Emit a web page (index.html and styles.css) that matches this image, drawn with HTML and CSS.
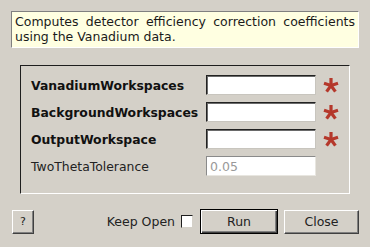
FILE: index.html
```html
<!DOCTYPE html>
<html lang="en">
<head>
    <meta charset="UTF-8">
    <title>Algorithm Dialog</title>
    <link rel="stylesheet" href="styles.css">
</head>
<body>
    <div class="dialog">
        <div class="description">Computes detector efficiency correction coefficients using the Vanadium data.</div>

        <div class="group">
            <!-- Propriedades -->
            <div class="label bold">VanadiumWorkspaces</div>
            <input class="field" type="text">
            <svg class="star" viewBox="0 0 16 16"><g stroke="#b5382b" stroke-width="3.2" stroke-linecap="butt"><line x1="8" y1="8.5" x2="8" y2="1"/><line x1="8" y1="8.5" x2="15" y2="6.2"/><line x1="8" y1="8.5" x2="12.4" y2="14.6"/><line x1="8" y1="8.5" x2="3.6" y2="14.6"/><line x1="8" y1="8.5" x2="1" y2="6.2"/></g></svg>

            <div class="label bold">BackgroundWorkspaces</div>
            <input class="field" type="text">
            <svg class="star" viewBox="0 0 16 16"><g stroke="#b5382b" stroke-width="3.2" stroke-linecap="butt"><line x1="8" y1="8.5" x2="8" y2="1"/><line x1="8" y1="8.5" x2="15" y2="6.2"/><line x1="8" y1="8.5" x2="12.4" y2="14.6"/><line x1="8" y1="8.5" x2="3.6" y2="14.6"/><line x1="8" y1="8.5" x2="1" y2="6.2"/></g></svg>

            <div class="label bold">OutputWorkspace</div>
            <input class="field" type="text">
            <svg class="star" viewBox="0 0 16 16"><g stroke="#b5382b" stroke-width="3.2" stroke-linecap="butt"><line x1="8" y1="8.5" x2="8" y2="1"/><line x1="8" y1="8.5" x2="15" y2="6.2"/><line x1="8" y1="8.5" x2="12.4" y2="14.6"/><line x1="8" y1="8.5" x2="3.6" y2="14.6"/><line x1="8" y1="8.5" x2="1" y2="6.2"/></g></svg>

            <div class="label">TwoThetaTolerance</div>
            <input class="field disabled" type="text" placeholder="0.05">
            <span></span>
        </div>

        <div class="actions">
            <button class="btn help">?</button>
            <span class="spacer"></span>
            <span class="keep">Keep Open</span>
            <span class="check"></span>
            <button class="btn run">Run</button>
            <button class="btn close">Close</button>
        </div>
    </div>
</body>
</html>
```

FILE: styles.css
```css
/* Estilo geral */
body {
    margin: 0;
    background: #d4d0c8;
    font-family: "DejaVu Sans", sans-serif;
    font-size: 12px;
    color: #000;
}

.dialog {
    width: 348px;
    height: 225px;
    padding: 11px;
}

.description {
    box-sizing: border-box;
    width: 348px;
    height: 37px;
    padding: 2px 3px 0 3px;
    background: #ffffe1;
    border: 1px solid;
    border-color: #808080 #fff #fff #808080;
    font-size: 12.5px;
    line-height: 15px;
    text-align: justify;
    color: #1a1a1a;
}

.group {
    box-sizing: border-box;
    width: 330px;
    height: 129px;
    margin: 17px 0 0 9px;
    padding: 9px 0 0 10px;
    border: 1px solid;
    border-color: #1e1e1e #fff #fff #1e1e1e;
    display: grid;
    grid-template-columns: 175px 110px 22px;
    grid-auto-rows: 20px;
    row-gap: 7px;
    align-items: center;
}

.label {
    font-size: 12.4px;
    color: #222;
}

.bold {
    font-weight: bold;
    color: #111;
}

.field {
    box-sizing: border-box;
    width: 110px;
    height: 20px;
    margin: 0;
    padding: 0 3px;
    background: #fff;
    border: 1px solid;
    border-color: #222 #c8c5be #c8c5be #222;
    box-shadow: inset 1px 1px 0 #6a6a6a;
    font-family: "DejaVu Sans", sans-serif;
    font-size: 12.5px;
    outline: none;
}

.field.disabled {
    border-color: #8a8a8a #e8e6e0 #e8e6e0 #8a8a8a;
    box-shadow: none;
}

.field.disabled::placeholder {
    color: #999;
}

.star {
    width: 16px;
    height: 16px;
    margin-left: 7px;
}

.actions {
    display: flex;
    align-items: center;
    margin-top: 15px;
    padding-left: 1px;
    width: 347px;
}

.spacer {
    flex: 1;
}

.btn {
    box-sizing: border-box;
    height: 24px;
    margin: 0;
    padding: 0;
    background: #d4d0c8;
    border: 1px solid;
    border-color: #fff #404040 #404040 #fff;
    box-shadow: inset -1px -1px 0 #808080;
    font-family: "DejaVu Sans", sans-serif;
    font-size: 12.5px;
    color: #222;
}

.help {
    width: 22px;
    font-size: 11px;
}

.keep {
    font-size: 12.5px;
    color: #222;
}

.check {
    box-sizing: border-box;
    width: 12px;
    height: 13px;
    margin: 0 7px 0 6px;
    background: #fff;
    border: 1px solid;
    border-color: #1e1e1e #d4d0c8 #d4d0c8 #1e1e1e;
}

.run {
    width: 78px;
    height: 25px;
    border: 1px solid #000;
    box-shadow: inset 1px 1px 0 #fff, inset -1px -1px 0 #404040, inset -2px -2px 0 #808080;
}

.close {
    width: 75px;
    margin-left: 6px;
}
```
